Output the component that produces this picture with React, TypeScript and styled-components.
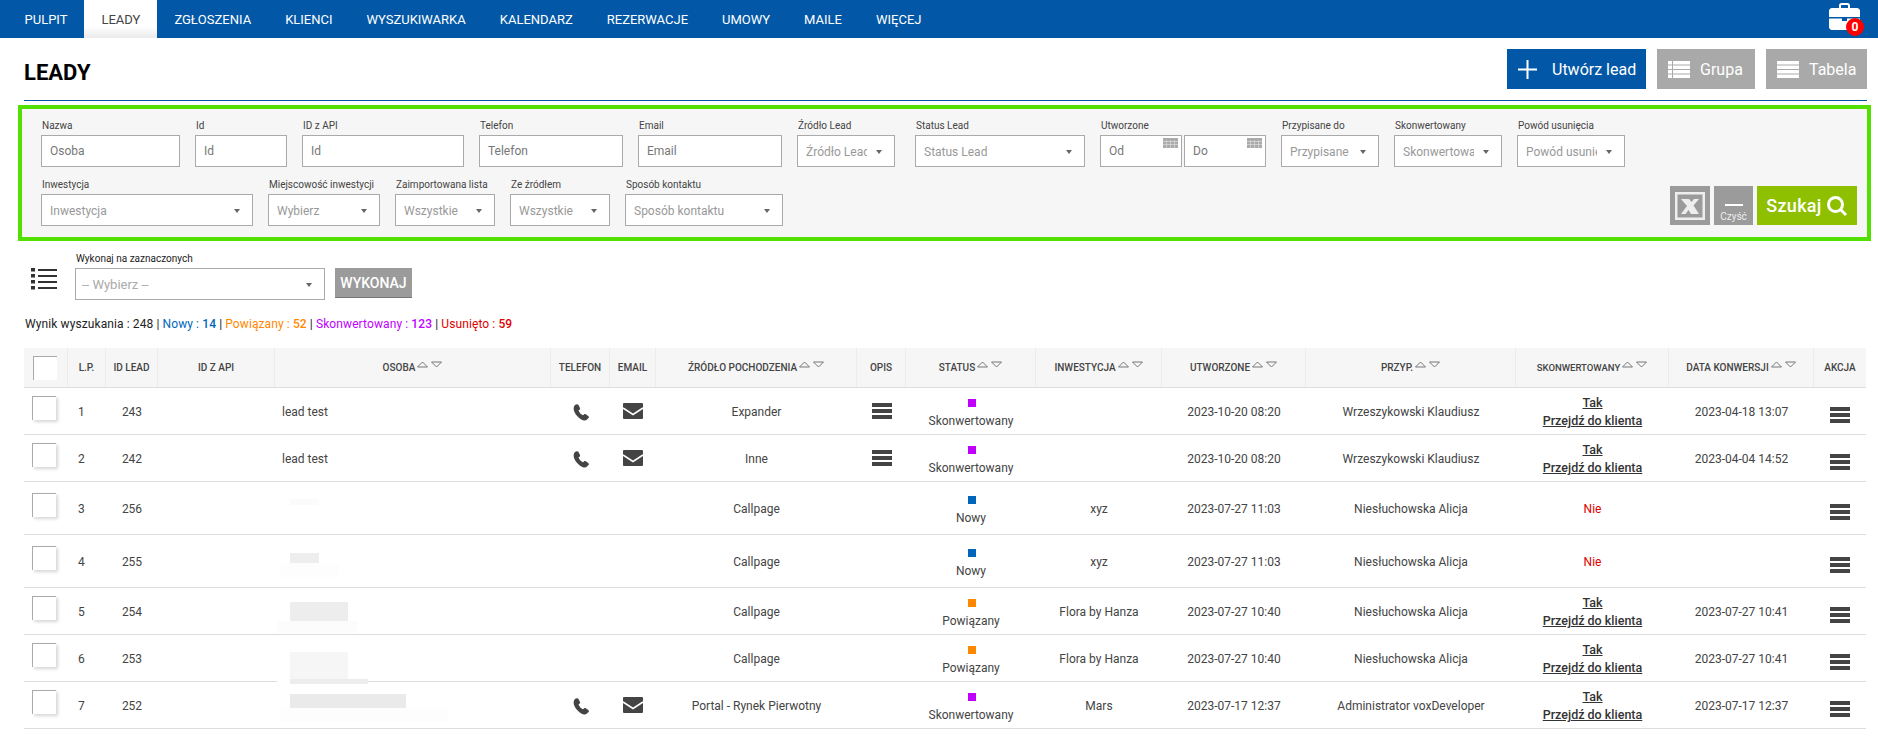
import React from 'react';
import styled, { createGlobalStyle } from 'styled-components';

const Global = createGlobalStyle`
  html, body { margin: 0; padding: 0; background: #fff; overflow: hidden; }
  body { font-family: Roboto, "Liberation Sans", Arial, sans-serif; font-size: 12px; color: #444; }
  * { box-sizing: border-box; }
`;

const Page = styled.div`width: 1878px; height: 737px; overflow: hidden;`;

const Nav = styled.nav`
  height: 38px; background: #0258a6; display: flex; align-items: stretch; padding: 0 18px 0 7.500px;
`;
const NavItem = styled.a<{ $active?: boolean }>`
  display: flex; align-items: center; padding: 0 17px; font-size: 13px; font-weight: 400;
  color: ${(p) => (p.$active ? '#444' : '#fff')};
  background: ${(p) => (p.$active ? 'linear-gradient(#fff 70%, #eaeaea)' : 'transparent')};
`;
const Case = styled.div`position: relative; margin: 3px 0 0 auto; width: 31px; height: 27px;`;
const Badge = styled.span`
  position: absolute; left: 17px; top: 15px; width: 18px; height: 18px; border-radius: 50%;
  background: #f00; color: #fff; font-size: 12px; font-weight: 700; display: flex; align-items: center; justify-content: center;
`;

const TitleRow = styled.header`
  height: 63px; margin: 0 11px 0 24px; display: flex; justify-content: space-between; align-items: flex-start;
  border-bottom: 1px solid #0258a6;
`;
const Title = styled.h1`margin: 24px 0 0; font-size: 22px; line-height: 22px; font-weight: 700; color: #000;`;
const Actions = styled.div`display: flex; gap: 11px; margin-top: 11px;`;
const ActionButton = styled.button<{ $primary?: boolean; $w: number }>`
  width: ${(p) => p.$w}px; height: 40px; border: 0; padding: 0 0 0 11px; display: flex; align-items: center;
  gap: ${(p) => (p.$primary ? 15 : 10)}px;
  background: ${(p) => (p.$primary ? '#0258a6' : '#a9a9a9')}; color: #fff; font: 400 16px Roboto, sans-serif;
`;

const Filters = styled.section`
  margin: 4px 7px 0 18px; height: 136px; border: 4px solid #52e000; background: #f6f6f6; padding: 11px 10px 0 19px;
  display: flex; flex-direction: column; gap: 12px;
`;
const FilterRow = styled.div`display: flex; gap: 15px; align-items: flex-end;`;
const Field = styled.div<{ $w: number; $ml?: number }>`
  width: ${(p) => p.$w}px; margin-left: ${(p) => p.$ml ?? 0}px; flex: none;
`;
const Label = styled.label`display: block; height: 11px; line-height: 11px; margin-bottom: 4px; padding-left: 1px; font-size: 10px; color: #444; white-space: nowrap;`;
const Input = styled.div`
  position: relative; height: 32px; border: 1px solid #aaa; background: #fff; padding: 0 8px; line-height: 30px;
  font-size: 12px; color: #777;
`;
const Select = styled.div`
  position: relative; height: 32px; border: 1px solid #aaa; background: #fff; padding: 1px 27px 0 8px; line-height: 30px;
  font-size: 12px; color: #999; white-space: nowrap; overflow: hidden;
  &::after {
    content: ''; position: absolute; right: 12px; top: 14px;
    border-left: 3.5px solid transparent; border-right: 3.5px solid transparent; border-top: 4px solid #666;
  }
`;
const SelectClip = styled.div`overflow: hidden;`;
const DatePair = styled.div`display: flex; gap: 2px;`;
const DateBox = styled(Input)`flex: 1;`;
const CalIcon = styled.svg`position: absolute; right: 3px; top: 2px;`;

const SearchButtons = styled.div`display: flex; gap: 4px; margin: 0 0 1px auto;`;
const GreyBox = styled.button`
  width: 40px; height: 39px; border: 0; padding: 0; background: #9b9b9b; color: #fff; display: flex; flex-direction: column;
  align-items: center; justify-content: center;
`;
const ClearBox = styled(GreyBox)`width: 39px; font-size: 10px; line-height: 12px; color: #eee; justify-content: flex-end; padding-bottom: 2px; font-family: Roboto, sans-serif;`;
const Dash = styled.i`display: block; width: 18px; height: 2px; background: #fff; margin-bottom: 5px;`;
const SearchBtn = styled.button`
  width: 100px; height: 39px; border: 0; padding: 0; background: #8fc000; color: #fff; font: 500 18px Roboto, sans-serif; letter-spacing: .3px;
  display: flex; align-items: center; justify-content: center; gap: 4px;
`;

const BulkRow = styled.div`display: flex; align-items: flex-start; margin: 13px 0 0 31px; height: 50px;`;
const BulkIcon = styled.svg`margin: 14px 18px 0 0;`;
const BulkLabel = styled.label`display: block; font-size: 10px; height: 11px; line-height: 10px; margin-bottom: 3px; padding-left: 1px; color: #222;`;
const BulkSelect = styled(Select)`width: 250px; color: #aaa; font-size: 13px; padding-left: 6px;`;
const RunButton = styled.button`
  margin: 14px 0 0 10px; width: 77px; height: 30px; border: 0; border-bottom: 1px solid #777; background: #9b9b9b; color: #fff;
  font: 500 14px Roboto, sans-serif; padding: 0;
`;

const Summary = styled.p`margin: 13px 0 0 25px; height: 15px; line-height: 15px; font-size: 12px; letter-spacing: .1px; color: #222;`;
const Tint = styled.span<{ $c: string }>`color: ${(p) => p.$c};`;
const Num = styled.b<{ $c: string }>`font-weight: 500; color: ${(p) => p.$c};`;

const cols = '44px 38px 52px 117px 276px 59px 46px 201px 49px 130px 126px 144px 210px 153px 145px 52px';
const Table = styled.div`margin: 16px 12px 0 24px; width: 1842px;`;
const Head = styled.div`display: grid; grid-template-columns: ${cols}; height: 40px; background: #f6f6f6; border-bottom: 1px solid #ddd;`;
const Th = styled.div<{ $small?: boolean }>`
  display: flex; align-items: center; justify-content: center; font-size: ${(p) => (p.$small ? 9.5 : 10)}px; font-weight: 500; color: #444;
  border-right: 1px solid #ececec; white-space: nowrap;
  &:last-child { border-right: 0; }
`;
const Sort = styled.svg`margin: -6px 0 0 2px; flex: none;`;
const Row = styled.div<{ $h: number }>`
  display: grid; grid-template-columns: ${cols}; height: ${(p) => p.$h}px; border-bottom: 1px solid #ddd;
`;
const Td = styled.div`
  position: relative; display: flex; flex-direction: column; align-items: center; justify-content: center; padding-top: 2px;
  font-size: 12px; line-height: 18px; color: #444; white-space: nowrap;
`;
const PadTd = styled(Td)`padding-left: 10px; align-items: flex-start;`;
const NameTd = styled(Td)`padding-left: 7px; align-items: flex-start;`;
const StatusTd = styled(Td)`padding-top: 7px;`;
const Check = styled.span`
  display: block; width: 24px; height: 24px; background: #fff; border-top: 1px solid #aaa; border-left: 1px solid #aaa;
  box-shadow: 2px 2px 3px rgba(0,0,0,.16); margin: -8px 0 0 -4px;
`;
const HeadCheck = styled.span`display: block; width: 24px; height: 24px; background: #fff; border-top: 1px solid #aaa; border-left: 1px solid #aaa; margin-left: -2px;`;
const Swatch = styled.i<{ $c: string }>`display: block; width: 8px; height: 8px; background: ${(p) => p.$c}; margin: 0 0 5px 1px;`;
const ConvLink = styled.a`color: #333; font-size: 12.5px; font-weight: 500; text-decoration: underline;`;
const No = styled.span`color: #e00000;`;
const Patch = styled.i<{ $x: number; $y: number; $w: number; $h: number; $c: string }>`
  position: absolute; left: ${(p) => p.$x}px; top: ${(p) => p.$y}px; width: ${(p) => p.$w}px; height: ${(p) => p.$h}px; background: ${(p) => p.$c}; z-index: 1;
`;
const Burger = styled.span<{ $dy?: number }>`
  display: block; width: 20px; height: 16px; margin-top: ${(p) => p.$dy ?? 0}px;
  background: linear-gradient(#444 0 4px, transparent 4px 6px, #444 6px 10px, transparent 10px 12px, #444 12px 16px);
`;
const MailIcon = styled.svg`margin-top: -2px;`;

const SortArrows = () => (
  <Sort width="25" height="7" viewBox="0 0 25 7" fill="none" stroke="#777">
    <path d="M.5 6h10L5.500 1z" />
    <path d="M14.500 1h10l-5 5z" />
  </Sort>
);
const Phone = () => (
  <svg width="16" height="17" viewBox="0 0 16 17" fill="#444">
    <path d="M2 1C3 0 5 0 5.500 1L7 4C7.300 4.700 7 5.300 6.500 5.700L5.500 6.500C6.500 8.800 8 10.300 10 11.300L11 10.500C11.500 10 12.300 10 12.800 10.300L15.500 12.200C16 12.700 16 13.500 15.500 14L14 15.500C13 16.500 11.500 16.800 10 16.200C5.500 14.300 2 10.500 .8 6C.4 4.400 .8 2.200 2 1z" />
  </svg>
);
const Mail = () => (
  <MailIcon width="20" height="16" viewBox="0 0 20 16">
    <rect width="20" height="16" rx="1" fill="#444" />
    <path d="M0 5l10 6.500L20 5" fill="none" stroke="#fff" strokeWidth="1.500" />
  </MailIcon>
);
const BarIcon = ({ split }: { split?: boolean }) => (
  <svg width="22" height="17" viewBox="0 0 22 17" fill="#fff">
    <rect y="0" width="22" height="3.500" /><rect y="4.500" width="22" height="3.500" /><rect y="9" width="22" height="3.500" /><rect y="13.500" width="22" height="3.500" />
    {split ? <rect x="4" y="0" width="1" height="17" fill="#a9a9a9" /> : null}
  </svg>
);

type R = { n: number; id: number; h: number; name?: string; phone?: boolean; mail?: boolean; src: string; opis?: boolean; st: 'S' | 'N' | 'P'; inv?: string; date: string; who: string; conv?: string; patches?: [number, number, number, number, string][]; };
const ST = { S: ['Skonwertowany', '#c000ff'], N: ['Nowy', '#0066bb'], P: ['Powiązany', '#ff8800'] } as const;
const rows: R[] = [
  { n: 1, id: 243, h: 47, name: 'lead test', phone: true, mail: true, src: 'Expander', opis: true, st: 'S', date: '2023-10-20 08:20', who: 'Wrzeszykowski Klaudiusz', conv: '2023-04-18 13:07' },
  { n: 2, id: 242, h: 47, name: 'lead test', phone: true, mail: true, src: 'Inne', opis: true, st: 'S', date: '2023-10-20 08:20', who: 'Wrzeszykowski Klaudiusz', conv: '2023-04-04 14:52' },
  { n: 3, id: 256, h: 53, src: 'Callpage', st: 'N', inv: 'xyz', date: '2023-07-27 11:03', who: 'Niesłuchowska Alicja', patches: [[15, 17, 29, 6, '#fbfbfb']] },
  { n: 4, id: 255, h: 53, src: 'Callpage', st: 'N', inv: 'xyz', date: '2023-07-27 11:03', who: 'Niesłuchowska Alicja', patches: [[15, 18, 29, 10, '#eeeeee'], [5, 28, 59, 14, '#fdfdfd']] },
  { n: 5, id: 254, h: 47, src: 'Callpage', st: 'P', inv: 'Flora by Hanza', date: '2023-07-27 10:40', who: 'Niesłuchowska Alicja', conv: '2023-07-27 10:41', patches: [[15, 14, 58, 19, '#ededed'], [3, 33, 80, 12, '#fcfcfc']] },
  { n: 6, id: 253, h: 47, src: 'Callpage', st: 'P', inv: 'Flora by Hanza', date: '2023-07-27 10:40', who: 'Niesłuchowska Alicja', conv: '2023-07-27 10:41', patches: [[2, 44, 91, 5, '#ffffff'], [15, 17, 58, 27, '#f6f6f6'], [15, 44, 78, 5, '#ededed']] },
  { n: 7, id: 252, h: 47, phone: true, mail: true, src: 'Portal - Rynek Pierwotny', st: 'S', inv: 'Mars', date: '2023-07-17 12:37', who: 'Administrator voxDeveloper', conv: '2023-07-17 12:37', patches: [[15, 12, 116, 14, '#eaeaea'], [5, 26, 168, 14, '#fdfdfd']] },
];
const Cal = () => (
  <CalIcon width="15" height="10" viewBox="0 0 15 10"><rect width="15" height="10" fill="#aaa" /><path d="M0 3.500h15M0 6.500h15M3.500 2v8M7.500 2v8M11.500 2v8" stroke="#ddd" strokeWidth=".7" /></CalIcon>
);

const Sel = ({ label, w, ml, text }: { label: string; w: number; ml?: number; text: string }) => (
  <Field $w={w} $ml={ml}><Label>{label}</Label><Select><SelectClip>{text}</SelectClip></Select></Field>
);
const Txt = ({ label, w, text }: { label: string; w: number; text: string }) => (
  <Field $w={w}><Label>{label}</Label><Input>{text}</Input></Field>
);
const H = ({ t, sort, small }: { t: string; sort?: boolean; small?: boolean }) => (
  <Th $small={small}>{t}{sort ? <SortArrows /> : null}</Th>
);

export default function App() {
  return (
    <Page>
      <Global />
      <Nav>
        {['PULPIT', 'LEADY', 'ZGŁOSZENIA', 'KLIENCI', 'WYSZUKIWARKA', 'KALENDARZ', 'REZERWACJE', 'UMOWY', 'MAILE', 'WIĘCEJ'].map((t) => (
          <NavItem key={t} $active={t === 'LEADY'}>{t}</NavItem>
        ))}
        <Case>
          <svg width="31" height="27" viewBox="0 0 31 27" fill="#fff">
            <path d="M10 5V2.500C10 1.100 11 0 12.500 0h6C20 0 21 1.100 21 2.500V5h-2V2.500c0-.3-.2-.5-.5-.5h-6c-.3 0-.5.2-.5.500V5z" />
            <path d="M3 5h25c1.600 0 3 1.400 3 3v6H0V8c0-1.600 1.400-3 3-3zM0 15.500h13V18h5v-2.500h13V24c0 1.600-1.400 3-3 3H3c-1.600 0-3-1.400-3-3z" />
          </svg>
          <Badge>0</Badge>
        </Case>
      </Nav>

      <TitleRow>
        <Title>LEADY</Title>
        <Actions>
          <ActionButton $primary $w={139}>
            <svg width="19" height="19" viewBox="0 0 19 19" stroke="#fff" strokeWidth="2"><path d="M9.500 0v19M0 9.500h19" /></svg>
            Utwórz lead
          </ActionButton>
          <ActionButton $w={98}><BarIcon split />Grupa</ActionButton>
          <ActionButton $w={101}><BarIcon />Tabela</ActionButton>
        </Actions>
      </TitleRow>

      <Filters>
        <FilterRow>
          <Txt label="Nazwa" w={139} text="Osoba" />
          <Txt label="Id" w={92} text="Id" />
          <Txt label="ID z API" w={162} text="Id" />
          <Txt label="Telefon" w={144} text="Telefon" />
          <Txt label="Email" w={144} text="Email" />
          <Sel label="Źródło Lead" w={98} text="Źródło Lead" />
          <Sel label="Status Lead" w={170} ml={5} text="Status Lead" />
          <Field $w={166}>
            <Label>Utworzone</Label>
            <DatePair>
              <DateBox>Od<Cal /></DateBox>
              <DateBox>Do<Cal /></DateBox>
            </DatePair>
          </Field>
          <Sel label="Przypisane do" w={98} text="Przypisane do" />
          <Sel label="Skonwertowany" w={108} text="Skonwertowany" />
          <Sel label="Powód usunięcia" w={108} text="Powód usunięcia" />
        </FilterRow>
        <FilterRow>
          <Sel label="Inwestycja" w={212} text="Inwestycja" />
          <Sel label="Miejscowość inwestycji" w={112} text="Wybierz" />
          <Sel label="Zaimportowana lista" w={100} text="Wszystkie" />
          <Sel label="Ze źródłem" w={100} text="Wszystkie" />
          <Sel label="Sposób kontaktu" w={158} text="Sposób kontaktu" />
          <SearchButtons>
            <GreyBox>
              <svg width="30" height="28" viewBox="0 0 30 28">
                <rect x="1.250" y="1.250" width="27.500" height="25.500" fill="none" stroke="#eee" strokeWidth="2.500" />
                <path d="M6 7h8l2.500 3L19 7h5l-5.500 6.500L24 22h-8l-2.500-4-3 4H6l6-8z" fill="#eee" />
              </svg>
            </GreyBox>
            <ClearBox><Dash />Czyść</ClearBox>
            <SearchBtn>
              Szukaj
              <svg width="22" height="22" viewBox="0 0 22 22" fill="none" stroke="#fff" strokeWidth="3"><circle cx="9.500" cy="9.500" r="7" /><path d="M14.500 14.500 20 20" /></svg>
            </SearchBtn>
          </SearchButtons>
        </FilterRow>
      </Filters>

      <BulkRow>
        <BulkIcon width="26" height="22" viewBox="0 0 26 22" fill="#333">
          <rect y="0" width="4" height="3.500" /><rect x="7" y="1" width="19" height="2" />
          <rect y="6" width="4" height="3.500" /><rect x="7" y="7" width="19" height="2" />
          <rect y="12" width="4" height="3.500" /><rect x="7" y="13" width="19" height="2" />
          <rect y="18" width="4" height="3.500" /><rect x="7" y="19" width="19" height="2" />
        </BulkIcon>
        <div>
          <BulkLabel>Wykonaj na zaznaczonych</BulkLabel>
          <BulkSelect>-- Wybierz --</BulkSelect>
        </div>
        <RunButton>WYKONAJ</RunButton>
      </BulkRow>

      <Summary>
        Wynik wyszukania : 248 | <Tint $c="#0066bb">Nowy : <Num $c="#0066bb">14</Num></Tint> | <Tint $c="#ff8800">Powiązany : <Num $c="#ff8800">52</Num></Tint> | <Tint $c="#c000ff">Skonwertowany : <Num $c="#c000ff">123</Num></Tint> | <Tint $c="#e00000">Usunięto : <Num $c="#e00000">59</Num></Tint>
      </Summary>

      <Table>
        <Head>
          <Th><HeadCheck /></Th>
          <H t="L.P." />
          <H t="ID LEAD" />
          <H t="ID Z API" />
          <H t="OSOBA" sort />
          <H t="TELEFON" />
          <H t="EMAIL" />
          <H t="ŹRÓDŁO POCHODZENIA" sort />
          <H t="OPIS" />
          <H t="STATUS" sort />
          <H t="INWESTYCJA" sort />
          <H t="UTWORZONE" sort />
          <H t="PRZYP." sort />
          <H t="SKONWERTOWANY" sort small />
          <H t="DATA KONWERSJI" sort />
          <H t="AKCJA" />
        </Head>
        {rows.map((r) => (
          <Row key={r.n} $h={r.h}>
            <Td><Check /></Td>
            <PadTd>{r.n}</PadTd>
            <Td>{r.id}</Td>
            <Td />
            <NameTd>
              {r.name}
              {r.patches?.map(([x, y, w, h, c], i) => <Patch key={i} $x={x} $y={y} $w={w} $h={h} $c={c} />)}
            </NameTd>
            <Td>{r.phone ? <Phone /> : null}</Td>
            <Td>{r.mail ? <Mail /> : null}</Td>
            <Td>{r.src}</Td>
            <Td>{r.opis ? <Burger $dy={-2} /> : null}</Td>
            <StatusTd><Swatch $c={ST[r.st][1]} />{ST[r.st][0]}</StatusTd>
            <Td>{r.inv}</Td>
            <Td>{r.date}</Td>
            <Td>{r.who}</Td>
            <Td>
              {r.conv ? (<><ConvLink>Tak</ConvLink><ConvLink>Przejdź do klienta</ConvLink></>) : <No>Nie</No>}
            </Td>
            <Td>{r.conv}</Td>
            <Td><Burger $dy={6} /></Td>
          </Row>
        ))}
      </Table>
    </Page>
  );
}
